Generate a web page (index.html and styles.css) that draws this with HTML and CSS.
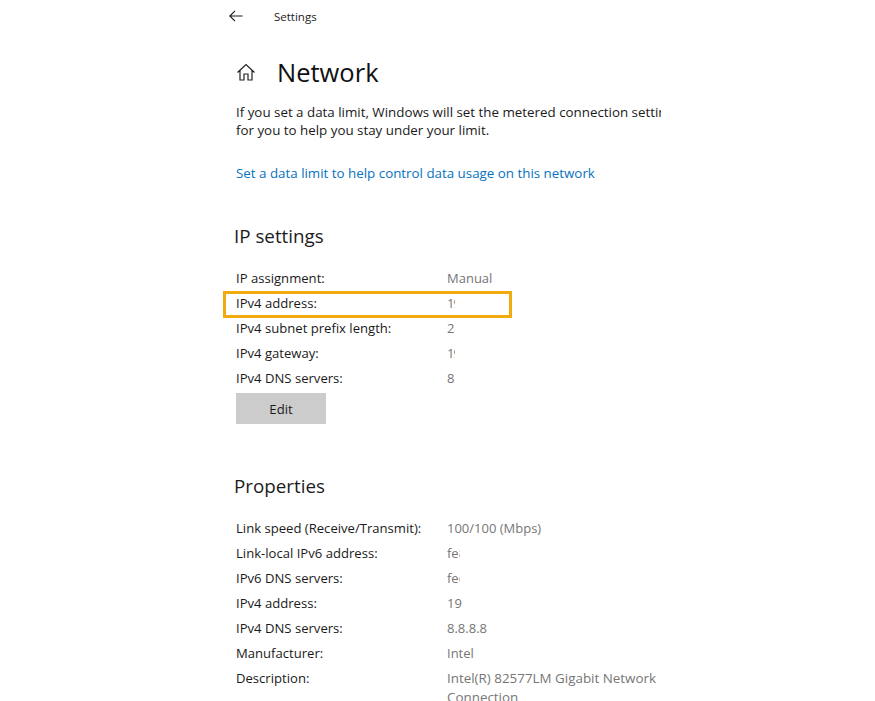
FILE: index.html
```html
<!DOCTYPE html>
<html lang="en">
<head>
<meta charset="utf-8">
<title>Settings</title>
<link rel="stylesheet" href="styles.css">
</head>
<body>
<div class="page">
  <header class="topbar">
    <svg class="back" viewBox="0 0 14 12" width="14" height="12" aria-hidden="true"><path d="M13.500 6H1M6 .8 .8 6 6 11.200" fill="none" stroke="#1a1a1a" stroke-width="1.100"/></svg>
    <span class="app">Settings</span>
  </header>
  <div class="title-row">
    <svg class="home" viewBox="0 0 20 20" width="20" height="20" aria-hidden="true"><path d="M1.500 10.500 10 2.500l8.500 8M4 8.500V18h4v-6h4v6h4V8.500" fill="none" stroke="#222" stroke-width="1.200"/></svg>
    <h1>Network</h1>
  </div>
  <p class="intro">If you set a data limit, Windows will set the metered connection setting<br>for you to help you stay under your limit.</p>
  <a class="link" href="#">Set a data limit to help control data usage on this network</a>

  <h2 class="h-ip">IP settings</h2>
  <div class="rows">
    <div class="row"><span class="k">IP assignment:</span><span class="v">Manual</span></div>
    <div class="row highlighted"><span class="k">IPv4 address:</span><span class="v w8 tight">192.168.1.10</span></div>
    <div class="row"><span class="k">IPv4 subnet prefix length:</span><span class="v w8">24</span></div>
    <div class="row"><span class="k">IPv4 gateway:</span><span class="v w8 tight">192.168.1.1</span></div>
    <div class="row"><span class="k">IPv4 DNS servers:</span><span class="v w8">8.8.8.8</span></div>
  </div>
  <button class="edit" type="button">Edit</button>

  <h2 class="h-prop">Properties</h2>
  <div class="rows">
    <div class="row"><span class="k">Link speed (Receive/Transmit):</span><span class="v">100/100 (Mbps)</span></div>
    <div class="row"><span class="k">Link-local IPv6 address:</span><span class="v w13">fe80::1</span></div>
    <div class="row"><span class="k">IPv6 DNS servers:</span><span class="v w13">fec0::1</span></div>
    <div class="row"><span class="k">IPv4 address:</span><span class="v w15">192.168.1.10</span></div>
    <div class="row"><span class="k">IPv4 DNS servers:</span><span class="v">8.8.8.8</span></div>
    <div class="row"><span class="k">Manufacturer:</span><span class="v">Intel</span></div>
    <div class="row desc"><span class="k">Description:</span><span class="v">Intel(R) 82577LM Gigabit Network Connection</span></div>
  </div>
</div>
</body>
</html>
```
FILE: styles.css
```css
html, body {
  margin: 0;
  height: 100%;
  background: #fff;
  overflow: hidden;
}
body {
  font-family: "Open Sans", "Noto Sans", sans-serif;
  color: #1a1a1a;
}
.page {
  width: 425px;
  height: 701px;
  margin-left: 236px;
  font-size: 13.1px;
}
.topbar {
  display: flex;
  align-items: center;
  height: 32px;
  margin-left: -7px;
}
.back { margin-right: 31px; margin-top: -1px; }
.app { font-size: 11.5px; color: #222; }
.title-row {
  display: flex;
  align-items: center;
  height: 48px;
  margin-top: 15px;
}
.home { margin-right: 21px; margin-top: 2px; }
h1 {
  margin: 1px 0 0;
  font-size: 25.5px;
  font-weight: 400;
  color: #111;
}
.intro {
  margin: 8px 0 0;
  line-height: 18px;
  white-space: nowrap;
  overflow: hidden;
  font-size: 13.35px;
}
.link {
  display: block;
  margin-top: 25px;
  line-height: 18px;
  color: #0672c0;
  text-decoration: none;
  font-size: 13.35px;
}
h2 {
  margin: 0 0 0 -2px;
  font-size: 18.8px;
  font-weight: 400;
  line-height: 28px;
  color: #1c1c1c;
}
.h-ip { margin-top: 40px; }
.h-prop { margin-top: 48px; }
.rows { margin-top: 16px; }
.row {
  display: flex;
  height: 25px;
  line-height: 25px;
  position: relative;
}
.k { width: 211px; flex: none; }
.v {
  color: #767676;
  flex: 1;
  font-size: 13px;
}
.w8 { flex: none; width: 8px; overflow: hidden; white-space: nowrap; }
.tight { letter-spacing: -1px; }
.w13 { flex: none; width: 13px; overflow: hidden; white-space: nowrap; }
.w15 { flex: none; width: 15px; overflow: hidden; white-space: nowrap; }
.desc { height: auto; }
.desc .v { line-height: 19px; padding-top: 3px; font-size: 13.4px; }
.highlighted::after {
  content: "";
  position: absolute;
  left: -13px;
  top: 0;
  width: 283px;
  height: 21px;
  border: 3px solid #f2ab0c;
}
.edit {
  display: block;
  width: 90px;
  height: 31px;
  margin-top: 2px;
  padding: 0;
  border: 0;
  background: #cccccc;
  font: inherit;
  color: #1a1a1a;
}
```
